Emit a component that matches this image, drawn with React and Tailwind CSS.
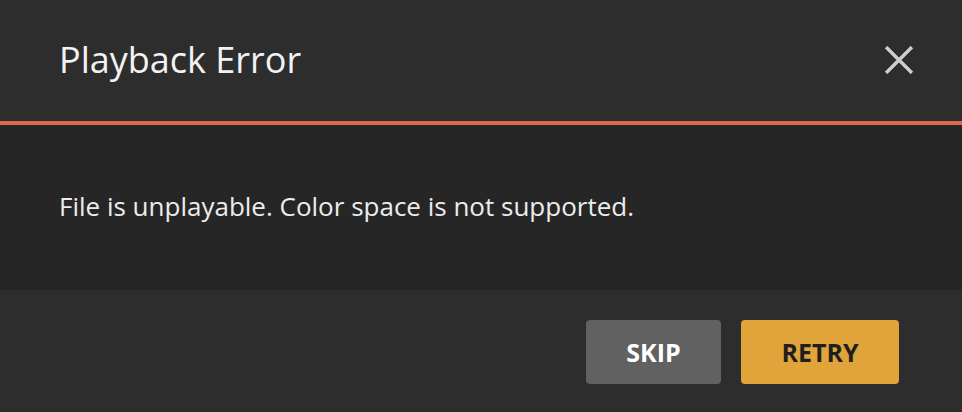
import React from 'react';

const App = () => {
  return (
    <div
      className="w-[962px] h-[412px] flex flex-col bg-[#2d2d2d] text-white overflow-hidden"
      style={{ fontFamily: '"Open Sans", "Noto Sans", sans-serif' }}
    >
      {/* Header */}
      <div className="h-[121px] flex items-center justify-between pl-[59px] pr-[48px] bg-[#2d2d2d]">
        <h1 className="text-[36px] font-normal text-[#f2f2f2] leading-none -mt-[2px]">Playback Error</h1>
        <button className="w-[30px] h-[30px] flex items-center justify-center text-[#cfcfcf] -mt-[2px]">
          <svg viewBox="0 0 26 26" className="w-[28px] h-[28px]" fill="none" stroke="currentColor" strokeWidth="3.2" strokeLinecap="butt">
            <path d="M1 1 L25 25 M25 1 L1 25" />
          </svg>
        </button>
      </div>
      <div className="h-[4px] bg-[#e0674b]" />

      {/* Body */}
      <div className="h-[165px] flex items-center pl-[59px] bg-[#262626]">
        <p className="text-[26px] leading-none text-[#ececec] -mt-[4px]">File is unplayable. Color space is not supported.</p>
      </div>

      {/* Footer */}
      <div className="flex-1 flex items-start justify-end gap-[20px] pr-[63px] pt-[30px] bg-[#2d2d2d]">
        <button className="w-[135px] h-[64px] rounded-[4px] bg-[#616161] text-white text-[25px] font-bold leading-none">
          SKIP
        </button>
        <button className="w-[158px] h-[64px] rounded-[4px] bg-[#e0a43a] text-[#1f1f1f] text-[25px] font-bold leading-none">
          RETRY
        </button>
      </div>
    </div>
  );
};

export default App;
